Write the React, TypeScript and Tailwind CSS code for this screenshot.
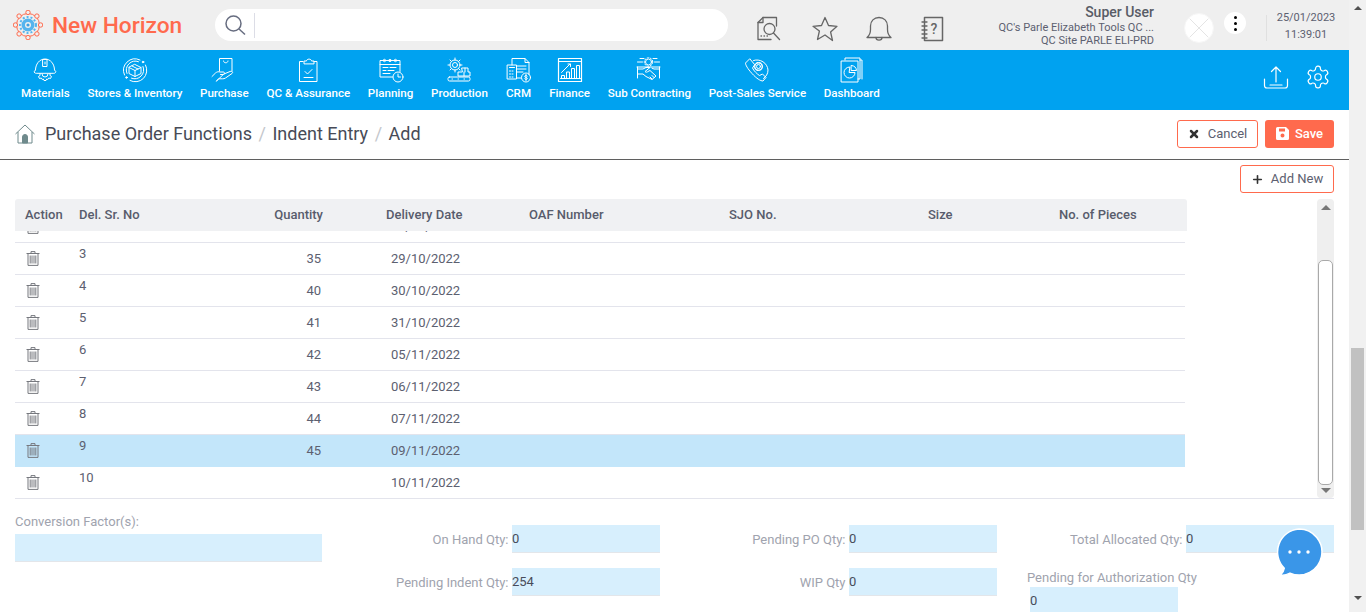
import { Plus, X } from 'lucide-react'
import type { ReactNode } from 'react'

const font = { fontFamily: 'Roboto, sans-serif' }

function Logo() {
  const dots = [0, 45, 90, 135, 180, 225, 270, 315]
  return (
    <svg width="30" height="30" viewBox="0 0 30 30" fill="none" className="shrink-0" aria-hidden>
      <circle cx="15" cy="15" r="11.5" stroke="#ff6a4d" strokeWidth="1" />
      {dots.map((a) => {
        const x = 15 + 12.6 * Math.cos((a * Math.PI) / 180)
        const y = 15 + 12.6 * Math.sin((a * Math.PI) / 180)
        return <circle key={a} cx={x} cy={y} r="2.2" fill="#f0f0f0" stroke="#ff6a4d" strokeWidth="1" />
      })}
      <circle cx="15" cy="15" r="6.5" fill="#55b4ee" />
      <circle cx="15" cy="15" r="8" stroke="#55b4ee" strokeWidth="2" strokeDasharray="2 2" />
      <circle cx="15" cy="15" r="3" fill="#f0f0f0" />
      <circle cx="15" cy="15" r="1.6" fill="#3f9fe0" />
    </svg>
  )
}

function NavIcon({ children, w = 26 }: { children: ReactNode; w?: number }) {
  return (
    <svg width={w} height="26" viewBox="0 0 26 26" fill="none" stroke="#fff" strokeWidth="1" strokeLinecap="round" strokeLinejoin="round" aria-hidden>
      {children}
    </svg>
  )
}

const navItems: { label: string; icon: ReactNode }[] = [
  {
    label: 'Materials',
    icon: (
      <NavIcon>
        <path d="M2.500 15.500c-.6-1-.2-2 1-2.200C3.500 7 7.500 2 13 2s9.500 5 9.500 11.300c1.200.2 1.600 1.200 1 2.200-.4.6-1 .8-1.700.8H4.200c-.7 0-1.300-.2-1.700-.8Z" />
        <path d="M11 2.500h4v7h-4zM13 5v2" />
        <path d="M8 16.500v2l-1.500 1 1 2 1.800-.5 1 1.500 1-.5.7 1.500h2l.7-1.500 1 .5 1-1.500 1.800.5 1-2-1.500-1v-2" />
        <path d="M10 17a3 3 0 0 0 6 0" />
      </NavIcon>
    ),
  },
  {
    label: 'Stores & Inventory',
    icon: (
      <NavIcon>
        <path d="M2.500 18a11.500 11.500 0 0 1 15.500-15M23.500 8A11.500 11.500 0 0 1 8 23.500" />
        <path d="M5 16.500A9 9 0 0 1 16.500 4.700M21 9.500A9 9 0 0 1 9.500 21.200" />
        <path d="M13 7.500l6 3v6l-6 3-6-3v-6zM7 10.500l6 3 6-3M13 13.500v6M10 9l6 3" />
        <circle cx="21" cy="5" r=".8" fill="#fff" />
        <circle cx="4.500" cy="20.500" r=".8" fill="#fff" />
      </NavIcon>
    ),
  },
  {
    label: 'Purchase',
    icon: (
      <NavIcon>
        <path d="M8.500 14V1.500h12.500V14" />
        <path d="M12.500 4c0 2.500 4.500 2.500 4.500 0" />
        <path d="M1 19.500l3.500-3.500c1.500-1.300 3-1.500 4.500-1h3.500c1.300 0 1.300 2.500 0 2.500H9.500" />
        <path d="M13 17l6-2.500c2-.8 3.500.8 2 2L14.500 21c-1 .7-2 .8-3 .8H7.500L5.500 24z" />
      </NavIcon>
    ),
  },
  {
    label: 'QC & Assurance',
    icon: (
      <NavIcon>
        <path d="M8 4.500H4.500v20h17.500V4.500h-3" />
        <path d="M9 6.500V4h2.500c0-2.500 5-2.500 5 0H19v2.500z" />
        <path d="M10 14.500l2.500 2.500 4.500-4.500M9 20.500h9" />
      </NavIcon>
    ),
  },
  {
    label: 'Planning',
    icon: (
      <NavIcon>
        <path d="M14.500 20H2V3.500h20v11" />
        <path d="M2 7.500h20" />
        <circle cx="6.500" cy="3.500" r="1.200" />
        <circle cx="12" cy="3.500" r="1.200" />
        <circle cx="17.500" cy="3.500" r="1.200" />
        <path d="M5 10.500h5M12 10.500h6M5 13.500h3M10 13.500h6M5 16.500h7" />
        <circle cx="20" cy="20" r="5" />
        <path d="M20 17v3h2.500" />
      </NavIcon>
    ),
  },
  {
    label: 'Production',
    icon: (
      <NavIcon>
        <circle cx="9" cy="8" r="2.500" />
        <circle cx="9" cy="8" r="5" />
        <path d="M9 1v2M9 13v2M2 8h2M14 8h2M4 3l1.500 1.500M12.500 11.500L14 13M4 13l1.500-1.500M12.500 4.500L14 3" />
        <path d="M16 11h6v4h2v4H12v-4h4zM19 11v4M18 15v4" />
        <rect x="2" y="20" width="22" height="4" rx="1.500" />
        <path d="M6 22h.5M12 22h.5M18 22h.5" />
      </NavIcon>
    ),
  },
  {
    label: 'CRM',
    icon: (
      <NavIcon>
        <path d="M6 8V1.500h13l4 4v12" />
        <path d="M19 1.500v4h4M11 9h9M11 12h9M11 15h6" />
        <rect x="1.500" y="8" width="9" height="14" />
        <path d="M3.500 10.500h5M3.500 14h1M6 14h1M3.500 17h1M6 17h1M3.500 20h1M6 20h1" />
        <path d="M10.500 21H15" />
        <circle cx="20" cy="20.500" r="4.500" />
        <path d="M20 17.500v6M21.200 19c-.5-.8-2.500-.8-2.500.4s2.600.9 2.600 2.100-2.200 1.200-2.700.3" />
      </NavIcon>
    ),
  },
  {
    label: 'Finance',
    icon: (
      <NavIcon>
        <path d="M1.500 1.500h23v23h-23zM1.500 4.500h23" strokeWidth="1.200" />
        <path d="M4.500 21.500v-3h3v3M9.500 21.500V15h3v6.500M14.500 21.500V11.500h3v10M19.500 21.500V8.500h3v13M3.500 21.500h20" />
        <path d="M4.500 15.500L13 7" />
        <path d="M11 7h2.500v2.500" />
      </NavIcon>
    ),
  },
  {
    label: 'Sub Contracting',
    icon: (
      <NavIcon>
        <circle cx="12.500" cy="5" r="3" />
        <circle cx="12.500" cy="5" r="4.200" strokeDasharray="1.500 1.500" />
        <path d="M1.500 5h5M18.500 5h5M4 1.500h4M17 1.500h4" />
        <path d="M1 10h23M1.500 10v11M23.500 10v11" />
        <path d="M2 12l5 0 3-1.500h4l-5 4c1 1 2 .8 3 0l2-1 6 5.500-4 3.500-6-3-3-2.500H2M23 12h-5l-2-.8" />
        <path d="M14 20l2 2M16 18.500l2 2" />
      </NavIcon>
    ),
  },
  {
    label: 'Post-Sales Service',
    icon: (
      <NavIcon>
        <path d="M9.500 3.500A11 11 0 0 1 24 13c0 4-2 6.500-4.500 8.500" />
        <path d="M5.500 2L1.500 6c0 2 2 5.500 6.500 10.500S16.500 24 19 24l3-3.500-3.500-3.500-3 1.500c-2-1-6-5-7-7.500L10.500 8z" />
        <circle cx="14.500" cy="9.500" r="2" />
        <circle cx="14.500" cy="9.500" r="3.800" strokeDasharray="1.800 1.200" strokeWidth="1.400" />
      </NavIcon>
    ),
  },
  {
    label: 'Dashboard',
    icon: (
      <NavIcon>
        <path d="M6 3V1h15v21h-2" />
        <path d="M2.500 4h16.500v21H2.500z" />
        <path d="M21 3h2v19" />
        <path d="M10.500 10a5.500 5.500 0 1 0 5.500 5.500h-5.500z" />
        <path d="M12.500 8.500a5.500 5.500 0 0 1 5 5h-5z" />
      </NavIcon>
    ),
  },
]

function GreyIcon({ children, size = 28 }: { children: ReactNode; size?: number }) {
  return (
    <svg width={size} height={size} viewBox="0 0 28 28" fill="none" stroke="#666" strokeWidth="1.3" strokeLinejoin="round" strokeLinecap="round" className="shrink-0" aria-hidden>
      {children}
    </svg>
  )
}

function TrashIcon() {
  return (
    <svg width="14" height="15" viewBox="0 0 14 15" fill="none" stroke="#77797f" strokeWidth="1" aria-hidden>
      <path d="M.5 2.500h13M5 2.500V.6h4v1.900" />
      <path d="M2 2.500v11.900h10V2.500" />
      <path d="M4.200 4.500v8M6 4.500v8M8 4.500v8M9.800 4.500v8" />
    </svg>
  )
}

const rows = [
  { sr: '2', qty: '34', date: '28/10/2022' },
  { sr: '3', qty: '35', date: '29/10/2022' },
  { sr: '4', qty: '40', date: '30/10/2022' },
  { sr: '5', qty: '41', date: '31/10/2022' },
  { sr: '6', qty: '42', date: '05/11/2022' },
  { sr: '7', qty: '43', date: '06/11/2022' },
  { sr: '8', qty: '44', date: '07/11/2022' },
  { sr: '9', qty: '45', date: '09/11/2022', active: true },
  { sr: '10', qty: '', date: '10/11/2022' },
]

function Field({ label, value }: { label: string; value: string }) {
  return (
    <div className="flex items-center justify-end gap-[3.5px]">
      <span className="mt-[1px] text-[13px] text-[#a0a3ae]">{label}</span>
      <div className="flex h-[28px] w-[148px] items-center border-b border-[#e3e6ea] bg-[#d7effd] text-[13px] text-[#484c5a]">{value}</div>
    </div>
  )
}

export default function App() {
  return (
    <div className="flex h-[612px] w-[1366px] overflow-hidden bg-white" style={font}>
      <div className="flex w-[1349px] shrink-0 flex-col">
        {/* top bar */}
        <header className="flex h-[50px] shrink-0 items-center bg-[#efefef] pl-[13px]">
          <Logo />
          <span className="mt-[2px] ml-[9px] w-[163px] shrink-0 text-[22.7px] leading-none font-medium text-[#ff6a4d]">New Horizon</span>
          <div className="flex h-[32px] w-[513px] shrink-0 items-center rounded-full bg-white pl-[9px]">
            <svg width="22" height="22" viewBox="0 0 22 22" fill="none" stroke="#676d80" strokeWidth="1.5" aria-hidden>
              <circle cx="9.500" cy="9.500" r="7.500" />
              <path d="M15 15l6 5.500" />
            </svg>
            <span className="ml-[8px] h-[25px] w-px bg-[#dcdde6]" />
          </div>
          <div className="ml-[28px] flex shrink-0 items-center gap-[27px] pt-[8px]">
            <GreyIcon>
              <path d="M20.500 11V2.500H7l-5 5v17h13" />
              <path d="M7 2.500v5H2" />
              <circle cx="13.500" cy="14" r="5.500" />
              <path d="M17.500 18l6 6.500M5 21h.5M8 21h.5M11 21h.5" />
            </GreyIcon>
            <GreyIcon>
              <path d="M14 2.500l3.500 8 8.500.8-6.400 5.700 1.900 8.500L14 20l-7.500 4.500 1.900-8.500L2 11.300l8.500-.8z" />
            </GreyIcon>
            <GreyIcon>
              <path d="M1 22.500c2.500-2 3.500-4 3.500-8V11c0-5 3.500-8.500 8.500-8.500s8.500 3.500 8.500 8.500v3.500c0 4 1 6 3.500 8z" />
              <path d="M10 22.500c0 3.500 6 3.500 6 0" />
            </GreyIcon>
            <GreyIcon>
              <path d="M3.500 2.500h18v23h-18z" strokeWidth="1.500" />
              <path d="M1 7h5M1 11h5M1 15h5M1 19h5M1 23h5" />
              <text x="13" y="18.500" fill="#666" stroke="none" fontSize="14" textAnchor="middle" fontWeight="500">?</text>
            </GreyIcon>
          </div>
          <div className="ml-[35px] w-[170px] shrink-0 pt-[1px] text-right leading-none">
            <div className="text-[14px] leading-[17px] font-medium text-[#585c66]">Super User</div>
            <div className="text-[11px] leading-[13px] text-[#5c6070]">QC's Parle Elizabeth Tools QC ...</div>
            <div className="text-[11px] leading-[13px] text-[#5c6070]">QC Site PARLE ELI-PRD</div>
          </div>
          <div className="mt-[6px] ml-[30px] flex h-[30px] w-[30px] shrink-0 items-center justify-center overflow-hidden rounded-full border border-[#f6f6f6] bg-white">
            <svg width="30" height="30" viewBox="0 0 30 30" stroke="#e2e2e2" aria-hidden>
              <path d="M5 5l20 20M25 5L5 25" />
            </svg>
          </div>
          <div className="mb-[4px] ml-[10px] flex h-[22px] w-[22px] shrink-0 flex-col items-center justify-center gap-[3px] rounded-full bg-white">
            <span className="h-[3px] w-[3px] rounded-full bg-black" />
            <span className="h-[3px] w-[3px] rounded-full bg-black" />
            <span className="h-[3px] w-[3px] rounded-full bg-black" />
          </div>
          <div className="mt-[6px] ml-[20px] h-[26px] w-px shrink-0 bg-[#e0e0e0]" />
          <div className="ml-[1px] w-[76px] shrink-0 pt-[2px] text-center text-[11px] leading-[17px] text-[#5c6070]">
            <div>25/01/2023</div>
            <div>11:39:01</div>
          </div>
        </header>

        {/* module nav */}
        <nav className="flex h-[60px] shrink-0 items-start bg-[#00a2f0] pl-[21px]">
          <div className="flex gap-[17.7px] pt-[7px]">
            {navItems.map((item) => (
              <div key={item.label} className="flex flex-col items-center text-white">
                {item.icon}
                <span className="mt-[2px] text-[11.6px] leading-[16px] font-medium whitespace-nowrap">{item.label}</span>
              </div>
            ))}
          </div>
          <div className="mt-[14px] mr-[18px] ml-auto flex items-center gap-[16px]">
            <svg width="26" height="26" viewBox="0 0 26 26" fill="none" stroke="#fff" strokeWidth="1.2" strokeLinecap="round" strokeLinejoin="round" aria-hidden>
              <path d="M13 18V3M8.500 7.500L13 3l4.500 4.500" />
              <path d="M1.500 15v6.500c0 1.500 1 2.500 2.500 2.500h18c1.500 0 2.500-1 2.500-2.500V15" />
              <path d="M7 21h12" />
            </svg>
            <svg width="26" height="26" viewBox="0 0 24 24" fill="none" stroke="#fff" strokeWidth="1.1" strokeLinecap="round" strokeLinejoin="round" aria-hidden>
              <path d="M12.22 2h-.44a2 2 0 0 0-2 2v.18a2 2 0 0 1-1 1.73l-.43.25a2 2 0 0 1-2 0l-.15-.08a2 2 0 0 0-2.73.73l-.22.38a2 2 0 0 0 .73 2.73l.15.1a2 2 0 0 1 1 1.72v.51a2 2 0 0 1-1 1.74l-.15.09a2 2 0 0 0-.73 2.73l.22.38a2 2 0 0 0 2.73.73l.15-.08a2 2 0 0 1 2 0l.43.25a2 2 0 0 1 1 1.73V20a2 2 0 0 0 2 2h.44a2 2 0 0 0 2-2v-.18a2 2 0 0 1 1-1.73l.43-.25a2 2 0 0 1 2 0l.15.08a2 2 0 0 0 2.73-.73l.22-.39a2 2 0 0 0-.73-2.73l-.15-.08a2 2 0 0 1-1-1.74v-.5a2 2 0 0 1 1-1.74l.15-.09a2 2 0 0 0 .73-2.73l-.22-.38a2 2 0 0 0-2.73-.73l-.15.08a2 2 0 0 1-2 0l-.43-.25a2 2 0 0 1-1-1.73V4a2 2 0 0 0-2-2z" />
              <circle cx="12" cy="12" r="3" />
            </svg>
          </div>
        </nav>

        {/* breadcrumb */}
        <div className="flex h-[50px] shrink-0 items-center border-b border-[#5f5f5f] px-[15px] pb-[2px]">
          <svg width="20" height="20" viewBox="0 0 20 20" fill="none" stroke="#6f8a8c" strokeWidth="1" aria-hidden>
            <path d="M.5 10L10 1l9.500 9M3 8v11h14V8" />
            <path d="M7.500 19v-6a2.500 2.500 0 0 1 5 0v6z" fill="#6f8a8c" />
          </svg>
          <div className="ml-[10px] flex items-center text-[18px] leading-none text-[#474b57]">
            <span>Purchase Order Functions</span>
            <span className="mx-[6.5px] text-[#c4c7cc]">/</span>
            <span>Indent Entry</span>
            <span className="mx-[6.5px] text-[#c4c7cc]">/</span>
            <span>Add</span>
          </div>
          <div className="ml-auto flex items-center gap-[7px]">
            <button className="flex h-[28px] w-[81px] items-center justify-center gap-[8px] rounded-[3px] border border-[#ff6a4d] bg-white text-[13px] text-[#5c6070]">
              <X size={12} strokeWidth={5} className="text-[#333]" />
              Cancel
            </button>
            <button className="flex h-[28px] w-[69px] items-center justify-center gap-[6px] rounded-[3px] bg-[#ff6a4d] text-[13px] font-medium text-white">
              <svg width="13" height="13" viewBox="0 0 13 13" aria-hidden>
                <path fillRule="evenodd" fill="#fff" d="M1.500 0H10l3 3v8.500a1.500 1.500 0 0 1-1.500 1.500h-10A1.500 1.500 0 0 1 0 11.500v-10A1.500 1.500 0 0 1 1.500 0ZM3 1.500V4.500H9V1.500ZM6.500 6.500a2 2 0 1 0 0 4 2 2 0 0 0 0-4Z" />
              </svg>
              Save
            </button>
          </div>
        </div>

        {/* content */}
        <div className="flex min-h-0 flex-1 flex-col px-[15px]">
          <div className="flex justify-end pt-[5px]">
            <button className="flex h-[28px] w-[94px] items-center justify-center gap-[7px] rounded-[3px] border border-[#ff6a4d] bg-white text-[13px] text-[#5c6070]">
              <Plus size={13} strokeWidth={3} className="text-[#333]" />
              Add New
            </button>
          </div>

          <div className="relative mt-[6px] h-[300px] shrink-0 border-b border-[#e3e4ec]">
            <div className="flex h-[32px] w-[1172px] items-center rounded-t-[3px] bg-[#f0f1f3] text-[13px] font-medium text-[#585c6c]">
              <span className="w-[64px] pl-[10px]">Action</span>
              <span className="w-[130px]">Del. Sr. No</span>
              <span className="w-[114px] text-right">Quantity</span>
              <span className="w-[140px] pl-[63px] whitespace-nowrap">Delivery Date</span>
              <span className="w-[200px] pl-[66px] whitespace-nowrap">OAF Number</span>
              <span className="w-[200px] pl-[66px] whitespace-nowrap">SJO No.</span>
              <span className="w-[195px] pl-[65px]">Size</span>
              <span className="pl-[1px] whitespace-nowrap">No. of Pieces</span>
            </div>
            <div className="h-[267px] overflow-hidden">
              <div className="-mt-[20px]">
                {rows.map((r) => (
                  <div key={r.sr} className={`flex h-[32px] w-[1170px] items-center border-b text-[13px] text-[#5c6070] ${r.active ? 'border-[#c3e6fa] bg-[#c3e6fa]' : 'border-[#e3e4ec]'}`}>
                    <span className="flex w-[64px] justify-start pl-[11px]">
                      <TrashIcon />
                    </span>
                    <span className="mb-[11px] w-[130px] leading-none">{r.sr}</span>
                    <span className="w-[112px] text-right tabular-nums">{r.qty}</span>
                    <span className="pl-[70px]">{r.date}</span>
                  </div>
                ))}
              </div>
            </div>
            {/* scrollbar of the grid */}
            <div className="absolute top-0 right-0 flex h-[299px] w-[17px] flex-col items-center rounded-[4px] bg-[#efefef]">
              <span className="mt-[6px] h-0 w-0 border-x-[5px] border-b-[5px] border-x-transparent border-b-[#777]" />
              <div className="mt-[50px] h-[225px] w-[15px] rounded-[5px] border border-[#a9a9a9] bg-white" />
              <span className="mt-[3px] h-0 w-0 border-x-[5px] border-t-[5px] border-x-transparent border-t-[#777]" />
            </div>
          </div>

          {/* quantities */}
          <div className="mt-[26px] flex">
            <div className="-mt-[11px] w-[307px] shrink-0">
              <div className="text-[13px] leading-[15px] text-[#a0a3ae]">Conversion Factor(s):</div>
              <div className="mt-[5px] h-[28px] border-b border-[#e3e6ea] bg-[#d7effd]" />
            </div>
            <div className="flex w-[338px] shrink-0 flex-col gap-[15px]">
              <Field label="On Hand Qty:" value="0" />
              <Field label="Pending Indent Qty:" value="254" />
            </div>
            <div className="flex w-[337px] shrink-0 flex-col gap-[15px]">
              <Field label="Pending PO Qty:" value="0" />
              <Field label="WIP Qty" value="0" />
            </div>
            <div className="flex w-[337px] shrink-0 flex-col gap-[15px]">
              <Field label="Total Allocated Qty:" value="0" />
              <div className="mt-[2px] ml-[30px]">
                <div className="text-[13px] leading-[15px] whitespace-nowrap text-[#a0a3ae]">Pending for Authorization Qty</div>
                <div className="mt-[2px] ml-[3px] flex h-[28px] w-[148px] items-center bg-[#d7effd] text-[13px] text-[#484c5a]">0</div>
              </div>
            </div>
          </div>
        </div>
      </div>

      {/* page scrollbar */}
      <div className="flex w-[17px] shrink-0 flex-col items-center bg-[#f1f1f1]">
        <span className="mt-[6px] h-0 w-0 border-x-[4px] border-b-[4px] border-x-transparent border-b-[#505050]" />
        <div className="mt-[338px] h-[182px] w-[13px] bg-[#c1c1c1]" />
        <span className="mt-[66px] h-0 w-0 border-x-[4px] border-t-[4px] border-x-transparent border-t-[#505050]" />
      </div>

      {/* chat bubble */}
      <div className="absolute top-[528px] left-[1275px] h-[49px] w-[49px]">
        <svg width="49" height="49" viewBox="0 0 49 49" aria-hidden>
          <path d="M24 1a23 23 0 1 1-9 44.200c-3 1.500-6 2.300-9.500 1.800 2-1.500 3.300-4 3.800-6.800A23 23 0 0 1 24 1Z" fill="#3a96e8" stroke="#fff" strokeWidth="1.500" />
          <circle cx="15" cy="24" r="1.700" fill="#fff" />
          <circle cx="24" cy="24" r="1.700" fill="#fff" />
          <circle cx="33" cy="24" r="1.700" fill="#fff" />
        </svg>
      </div>
    </div>
  )
}
